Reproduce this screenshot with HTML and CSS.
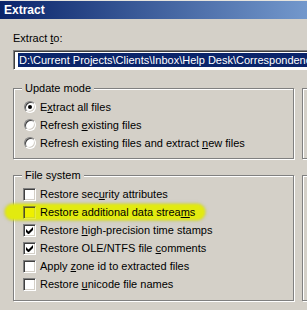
FILE: index.html
```html
<!DOCTYPE html>
<html>
<head>
<meta charset="utf-8">
<link rel="stylesheet" href="styles.css">
</head>
<body>
<div class="window">
  <div class="titlebar">Extract</div>
  <div class="content">
    <div class="label">Extract <u>t</u>o:</div>
    <div class="field"><span class="sel">D:\Current Projects\Clients\Inbox\Help Desk\Correspondenc</span></div>
    <div class="cols">
      <div class="col">
        <div class="group g-update">
          <span class="legend">Update mode</span>
          <div class="row"><span class="radio on"></span><span>E<u>x</u>tract all files</span></div>
          <div class="row"><span class="radio"></span><span>Refresh <u>e</u>xisting files</span></div>
          <div class="row"><span class="radio"></span><span>Refresh existing files and extract <u>n</u>ew files</span></div>
        </div>
        <div class="group g-fs">
          <span class="legend">File system</span>
          <div class="row"><span class="check"></span><span>Restore sec<u>u</u>rity attributes</span></div>
          <div class="row hl"><span class="mark"></span><span class="check yellow"></span><span>Restore additional data strea<u>m</u>s</span></div>
          <div class="row"><span class="check"><svg viewBox="0 0 7 7" width="7" height="7"><path d="M0 2v3l2 2h1l4-4V0L2.5 4.5z" fill="#000"/></svg></span><span>Restore <u>h</u>igh-precision time stamps</span></div>
          <div class="row"><span class="check"><svg viewBox="0 0 7 7" width="7" height="7"><path d="M0 2v3l2 2h1l4-4V0L2.5 4.5z" fill="#000"/></svg></span><span>Restore OLE/NTFS file <u>c</u>omments</span></div>
          <div class="row"><span class="check"></span><span>Apply <u>z</u>one id to extracted files</span></div>
          <div class="row"><span class="check"></span><span>Restore <u>u</u>nicode file names</span></div>
        </div>
      </div>
      <div class="col">
        <div class="group g-update"></div>
        <div class="group g-fs"></div>
      </div>
    </div>
  </div>
</div>
</body>
</html>
```
FILE: styles.css
```css
html, body {
  margin: 0;
  padding: 0;
  background: #d4d0c8;
}
.window {
  width: 307px;
  height: 310px;
  overflow: hidden;
  background: #d4d0c8;
  font-family: "Liberation Sans", Arial, sans-serif;
  font-size: 11px;
  color: #000;
  border-top: 1px solid #e6e4de;
  box-sizing: border-box;
}
.titlebar {
  height: 18px;
  background: linear-gradient(to right, #0a246a 0%, #3a5a98 45%, #7398cc 100%);
  color: #fff;
  font-weight: bold;
  font-size: 12px;
  line-height: 18px;
  padding-left: 4px;
}
.content {
  padding-left: 13px;
}
.label {
  margin-top: 13px;
  height: 13px;
  line-height: 13px;
}
.field {
  margin-top: 5px;
  height: 20px;
  box-sizing: border-box;
  border-top: 1px solid #808080;
  border-left: 1px solid #808080;
  border-bottom: 1px solid #fff;
  background: #fff;
  box-shadow: inset 1px 1px 0 #404040;
  padding: 2px 0 2px 4px;
  white-space: nowrap;
  overflow: hidden;
  width: 294px;
}
.sel {
  display: inline-block;
  background: #0a246a;
  color: #fff;
  height: 14px;
  line-height: 14px;
  padding-left: 1px;
  padding-right: 10px;
}
.cols {
  display: grid;
  grid-template-columns: 281px 200px;
  column-gap: 8px;
  margin-top: 18px;
}
.group {
  position: relative;
  border: 1px solid #808080;
  box-shadow: 1px 1px 0 #fff, inset 1px 1px 0 #fff;
  padding: 9px 0 7px 9px;
}
.g-update {
  height: 71px;
  box-sizing: border-box;
}
.g-fs {
  margin-top: 16px;
  height: 126px;
  box-sizing: border-box;
}
.legend {
  position: absolute;
  top: -7px;
  left: 8px;
  padding: 0 3px;
  background: #d4d0c8;
  line-height: 13px;
}
.row {
  position: relative;
  display: flex;
  align-items: center;
  height: 18px;
  white-space: nowrap;
}
.radio {
  width: 12px;
  height: 12px;
  margin-left: 1px;
  margin-right: 4px;
  border-radius: 50%;
  box-sizing: border-box;
  background: #fff;
  border: 1px solid;
  border-color: #808080 #fff #fff #808080;
  box-shadow: inset 1px 1px 0 #404040, inset -1px -1px 0 #d4d0c8;
  position: relative;
  flex: none;
}
.radio.on::after {
  content: "";
  position: absolute;
  left: 3px;
  top: 3px;
  width: 4px;
  height: 4px;
  border-radius: 50%;
  background: #000;
}
.check {
  width: 13px;
  height: 13px;
  margin-right: 4px;
  box-sizing: border-box;
  background: #fff;
  border: 1px solid;
  border-color: #808080 #fff #fff #808080;
  box-shadow: inset 1px 1px 0 #404040, inset -1px -1px 0 #d4d0c8;
  display: flex;
  align-items: center;
  justify-content: center;
  flex: none;
  position: relative;
  z-index: 1;
}
.check svg {
  display: block;
}
.check.yellow {
  background: #eef000;
  border-color: #8a8a30 #e8ee40 #e8ee40 #8a8a30;
  box-shadow: inset 1px 1px 0 #50501c, inset -1px -1px 0 #d6dc20;
}
.row span:last-child {
  position: relative;
  z-index: 1;
}
.mark {
  position: absolute;
  left: -18px;
  top: 1px;
  width: 200px;
  height: 16px;
  border-radius: 8px;
  background: #e2ea10;
  box-shadow: 0 0 2px 1px rgba(190, 196, 40, 0.6);
  filter: blur(0.8px);
  z-index: 0;
}
```
